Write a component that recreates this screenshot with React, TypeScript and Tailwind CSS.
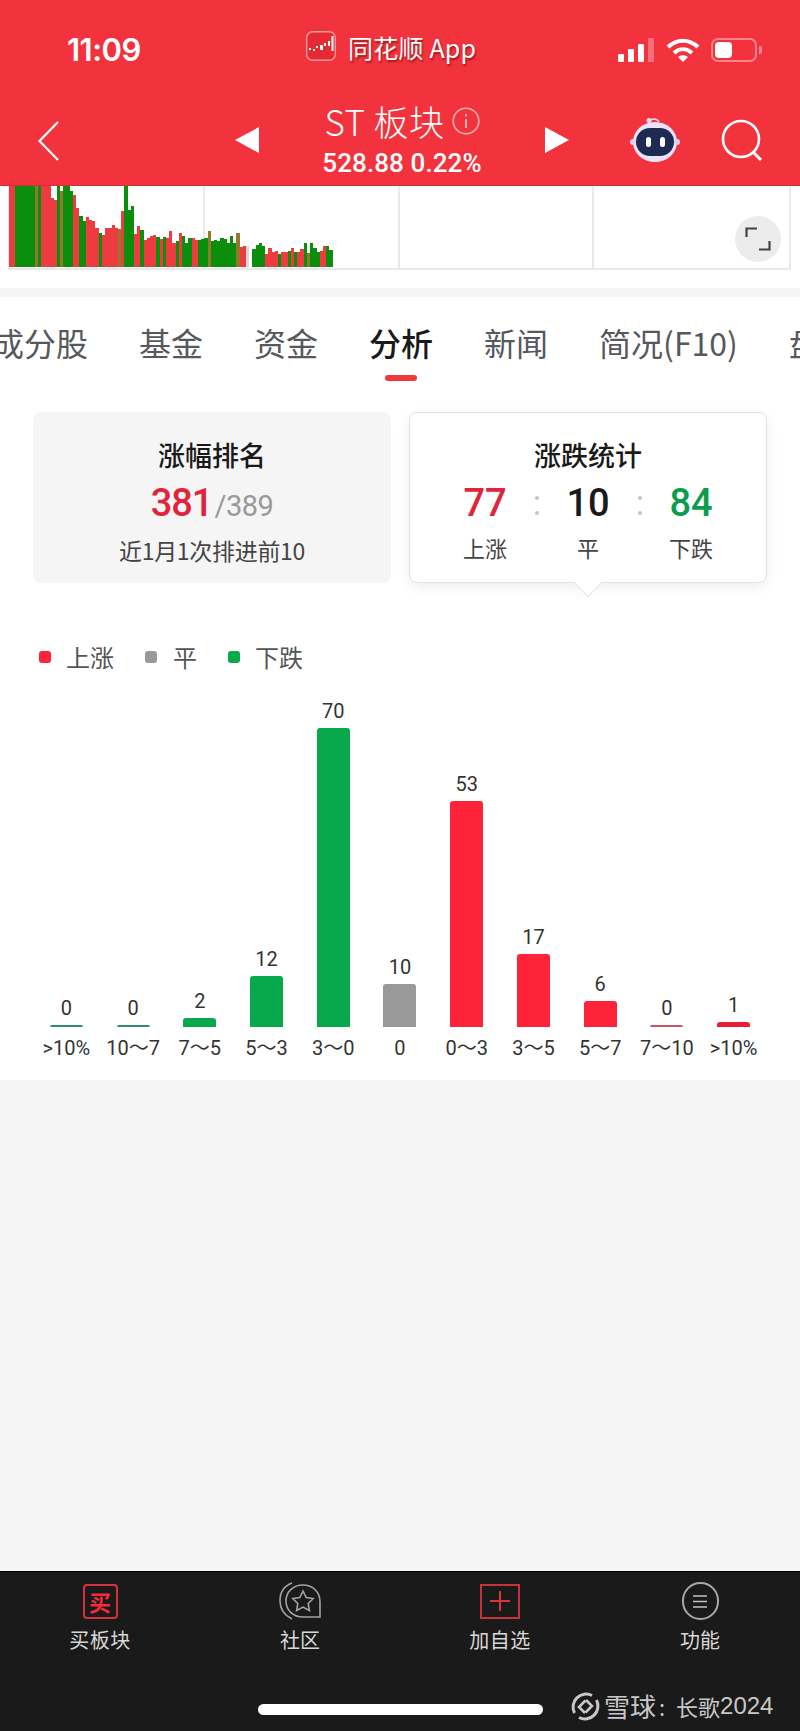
// App.tsx
const VOLUME: [string, number][] = [
  ['r', 20], ['r', 20], ['g', 20], ['g', 20], ['g', 20], ['g', 20], ['g', 20], ['g', 20], ['d', 20], ['g', 20],
  ['r', 20], ['r', 20], ['r', 20], ['r', 55], ['r', 60], ['g', 20], ['d', 35], ['g', 20], ['g', 20], ['g', 35],
  ['r', 47], ['r', 84], ['g', 110], ['g', 125], ['r', 113], ['r', 120], ['r', 125], ['r', 145], ['g', 160], ['r', 166],
  ['r', 145], ['r', 145], ['r', 135], ['r', 145], ['d', 148], ['r', 95], ['g', 20], ['g', 90], ['g', 80], ['r', 162],
  ['r', 140], ['g', 150], ['r', 180], ['r', 175], ['r', 170], ['r', 166], ['g', 172], ['r', 178], ['g', 172], ['r', 175],
  ['r', 154], ['r', 190], ['g', 185], ['r', 160], ['g', 168], ['g', 190], ['g', 175], ['r', 175], ['r', 180], ['g', 182],
  ['g', 178], ['g', 175], ['d', 155], ['g', 185], ['g', 182], ['g', 185], ['g', 176], ['g', 178], ['g', 190], ['g', 168],
  ['g', 190], ['d', 160], ['r', 203], ['r', 200], ['n', 200], ['x', 262], ['g', 207], ['g', 195], ['g', 190], ['g', 200],
  ['r', 222], ['r', 204], ['r', 218], ['r', 213], ['g', 222], ['r', 218], ['r', 218], ['g', 215], ['r', 206], ['g', 218],
  ['r', 218], ['r', 208], ['g', 190], ['d', 220], ['g', 190], ['g', 205], ['g', 218], ['r', 215], ['r', 198], ['g', 200],
  ['g', 212],
];

const BUCKETS = [
  { value: 0, label: '>10%', color: 'bg-[#2f8f6c]' },
  { value: 0, label: '10～7', color: 'bg-[#2f8f6c]' },
  { value: 2, label: '7～5', color: 'bg-[#08a84c]' },
  { value: 12, label: '5～3', color: 'bg-[#08a84c]' },
  { value: 70, label: '3～0', color: 'bg-[#08a84c]' },
  { value: 10, label: '0', color: 'bg-[#999999]' },
  { value: 53, label: '0～3', color: 'bg-[#ff233a]' },
  { value: 17, label: '3～5', color: 'bg-[#ff233a]' },
  { value: 6, label: '5～7', color: 'bg-[#ff233a]' },
  { value: 0, label: '7～10', color: 'bg-[#c4566a]' },
  { value: 1, label: '>10%', color: 'bg-[#e81f36]' },
];

const barColor = (c: string) => {
  if (c === 'r') return 'bg-[#ee3b3f]';
  if (c === 'g') return 'bg-[#0a8e0c]';
  if (c === 'd') return 'bg-[#8f7a2c]';
  if (c === 'n') return 'bg-[#d8d8d8]';
  return 'bg-transparent';
};

function VolumeChart() {
  return (
    <div className="relative h-[102px] bg-white">
      <div className="ml-[8px] grid h-[84px] w-[783px] grid-cols-4 border-x-2 border-b-2 border-[#e9e9e9]">
        <div className="border-r-2 border-[#e9e9e9]" />
        <div className="border-r-2 border-[#e9e9e9]" />
        <div className="border-r-2 border-[#e9e9e9]" />
        <div />
      </div>
      <div className="absolute left-[9px] top-0 flex h-[81px] w-[324px] items-end overflow-hidden">
        {VOLUME.map(([c, top], i) => (
          <div
            key={i}
            className={`flex-1 ${barColor(c)}`}
            style={{ height: `${(262 - top) / 3 + (top === 20 ? 3 : 0)}px` }}
          />
        ))}
      </div>
      <button className="absolute left-[735px] top-[30px] flex h-[46px] w-[46px] items-center justify-center rounded-full bg-[#ececec]">
        <svg width="26" height="24" viewBox="0 0 26 24" fill="none" stroke="#3f4348" strokeWidth="2.2">
          <path d="M1.5 10V1.5H12" />
          <path d="M14 22.5h10.5V14" />
        </svg>
      </button>
    </div>
  );
}

function Header() {
  return (
    <header className="h-[186px] shrink-0 border-b border-[#c9343a] bg-[#f2333d] text-white">
      <div className="flex h-[100px] items-start pl-[67px] pt-[31px]">
        <div className="w-[239px] pt-[1px] font-['Inter',sans-serif] text-[31px] font-semibold leading-[36px] tracking-[-0.5px]">11:09</div>
        <svg width="30" height="30" viewBox="0 0 30 30">
          <rect x="0.7" y="0.7" width="28.6" height="28.6" rx="6" fill="#e52a33" stroke="#f79a9d" strokeWidth="1.4" />
          <g fill="#fff">
            <rect x="3" y="17" width="2" height="2" />
            <rect x="7" y="18" width="2" height="2" />
            <rect x="10" y="15" width="2" height="2" />
            <rect x="14" y="14" width="3" height="5" />
            <rect x="18" y="12" width="2" height="3" />
            <rect x="22" y="10" width="2" height="5" />
            <rect x="25.5" y="5" width="2" height="15" />
          </g>
        </svg>
        <div className="ml-[12px] font-['Noto_Sans_CJK_SC',sans-serif] text-[25px] leading-[32px] tracking-[0.2px] [text-shadow:1px_2px_2px_rgba(90,0,0,0.55)]">同花顺 App</div>
        <div className="ml-auto flex items-center pr-[38px] pt-[7px]">
          <div className="flex h-[24px] items-end gap-[4px]">
            <div className="h-[8px] w-[6px] rounded-[1px] bg-white" />
            <div className="h-[13px] w-[6px] rounded-[1px] bg-white" />
            <div className="h-[18px] w-[6px] rounded-[1px] bg-white" />
            <div className="h-[24px] w-[6px] rounded-[1px] bg-white/30" />
          </div>
          <svg className="ml-[12px]" width="34" height="24" viewBox="0 0 34 24" fill="none" stroke="#fff" strokeWidth="4">
            <path d="M2 9C11 0.5 23 0.5 32 9" />
            <path d="M8 15c5.5-5 12.5-5 18 0" />
            <path d="M17 24l-5-5c3-2.500 7-2.500 10 0z" fill="#fff" stroke="none" />
          </svg>
          <div className="ml-[11px] flex h-[24px] w-[46px] items-center rounded-[7px] border-2 border-white/40 pl-[2px]">
            <div className="h-[16px] w-[17px] rounded-[4px] bg-white" />
          </div>
          <div className="ml-[2px] h-[8px] w-[3px] rounded-r-[2px] bg-white/40" />
        </div>
      </div>
      <div className="flex items-start pl-[38px]">
        <svg className="mt-[21px]" width="21" height="40" viewBox="0 0 21 40" fill="none" stroke="#fff" strokeWidth="2.2">
          <path d="M20 1L1.500 20 20 39" />
        </svg>
        <svg className="ml-[176px] mt-[27px]" width="24" height="26" viewBox="0 0 24 26" fill="#fff">
          <path d="M24 0V26L0 13z" />
        </svg>
        <div className="flex w-[286px] flex-col items-center font-['Noto_Sans_CJK_SC',sans-serif]">
          <div className="flex h-[42px] items-center">
            <span className="text-[35px] font-light leading-[42px] tracking-[0.5px]">ST 板块</span>
            <svg className="ml-[7px]" width="28" height="28" viewBox="0 0 28 28" fill="none" stroke="#ffb3b5" strokeWidth="1.600">
              <circle cx="14" cy="14" r="12.800" />
              <path d="M14 12v9" strokeWidth="2" />
              <path d="M14 7v2.500" strokeWidth="2" />
            </svg>
          </div>
          <div className="mt-[1px] font-['Roboto',sans-serif] text-[26px] font-medium leading-[40px] tracking-[0.1px]">528.88 0.22%</div>
        </div>
        <svg className="mt-[27px]" width="24" height="26" viewBox="0 0 24 26" fill="#fff">
          <path d="M0 0V26L24 13z" />
        </svg>
        <svg className="ml-[61px] mt-[17px]" width="50" height="46" viewBox="0 0 50 46">
          <path d="M20 6c0-3 2-4 4-4s4 1 5 3" fill="none" stroke="#e6dcf7" strokeWidth="1.500" />
          <circle cx="19" cy="3.500" r="2.500" fill="#e6dcf7" />
          <ellipse cx="25" cy="25" rx="22" ry="20" fill="#eae4fb" />
          <circle cx="3" cy="25" r="3" fill="#dcd3f2" />
          <circle cx="47" cy="25" r="3" fill="#dcd3f2" />
          <rect x="6" y="11" width="38" height="28" rx="14" fill="#1e2a4f" />
          <rect x="16" y="20" width="5" height="10" rx="2.500" fill="#fff" />
          <rect x="30" y="20" width="5" height="10" rx="2.500" fill="#fff" />
        </svg>
        <svg className="ml-[41px] mt-[19px]" width="42" height="42" viewBox="0 0 42 42" fill="none" stroke="#fff" strokeWidth="2.600">
          <circle cx="20" cy="20" r="18" />
          <path d="M32 33l8 8" strokeWidth="3" />
        </svg>
      </div>
    </header>
  );
}

function RankCard() {
  return (
    <div className="flex h-[171px] w-[358px] flex-col items-center rounded-lg bg-[#f5f5f5] pt-[25px]">
      <div className="text-[27px] font-medium leading-[36px] text-[#1a1a1a]">涨幅排名</div>
      <div className="mt-[8px] flex items-baseline font-['Roboto',sans-serif] leading-[44px]">
        <span className="text-[38px] font-medium tracking-[-1px] text-[#e0243c]">381</span>
        <span className="ml-[2px] text-[29px] tracking-[-0.5px] text-[#999999]">/389</span>
      </div>
      <div className="mt-[6px] text-[23px] leading-[32px] tracking-[-0.3px] text-[#444444]">近1月1次排进前10</div>
    </div>
  );
}

function StatCol({ value, label, color }: { value: number; label: string; color: string }) {
  return (
    <div className="flex w-[72px] flex-col items-center">
      <div className={`font-['Roboto',sans-serif] text-[38px] font-medium leading-[44px] ${color}`}>{value}</div>
      <div className="mt-[6px] text-[22px] leading-[32px] text-[#444444]">{label}</div>
    </div>
  );
}

function Colon() {
  return (
    <div className="flex h-[44px] w-[31px] flex-col items-center justify-center gap-[11px] pt-[5px]">
      <div className="h-[4px] w-[4px] rounded-full bg-[#c4c4c4]" />
      <div className="h-[4px] w-[4px] rounded-full bg-[#c4c4c4]" />
    </div>
  );
}

function StatCard() {
  return (
    <div className="relative flex h-[171px] w-[358px] flex-col items-center rounded-lg border border-[#e2e2e2] bg-white pt-[24px] shadow-[0_4px_14px_rgba(0,0,0,0.07)]">
      <div className="text-[27px] font-medium leading-[36px] text-[#1a1a1a]">涨跌统计</div>
      <div className="mt-[8px] flex">
        <StatCol value={77} label="上涨" color="text-[#e0243c]" />
        <Colon />
        <StatCol value={10} label="平" color="text-[#1a1a1a]" />
        <Colon />
        <StatCol value={84} label="下跌" color="text-[#0a9e4c]" />
      </div>
      <div className="absolute -bottom-[11px] left-[168px] h-[20px] w-[20px] rotate-45 border-b border-r border-[#e2e2e2] bg-white" />
    </div>
  );
}

function Distribution() {
  return (
    <div className="grid grid-cols-11 px-[33px]">
      {BUCKETS.map((b, i) => (
        <div key={i} className="flex flex-col items-center">
          <div className="flex h-[354px] flex-col items-center justify-end">
            <div className="mb-[5px] font-['Roboto',sans-serif] text-[20px] leading-[24px] text-[#333333]">{b.value}</div>
            <div
              className={`w-[33px] rounded-t-[3px] ${b.color}`}
              style={{ height: `${b.value === 0 ? 2 : b.value === 1 ? 5 : Math.round(b.value * 4.27)}px` }}
            />
          </div>
          <div className="mt-[7px] whitespace-nowrap font-['Roboto','Noto_Sans_CJK_SC',sans-serif] text-[20px] leading-[28px] text-[#333333]">{b.label}</div>
        </div>
      ))}
    </div>
  );
}

function BottomBar() {
  return (
    <footer className="relative h-[160px] shrink-0 border-t border-black bg-[#1a1a1a] font-['Noto_Sans_CJK_SC',sans-serif]">
      <div className="grid grid-cols-4 pt-[10px] text-[20px] leading-[28px] text-[#d8d8d8]">
        <div className="flex flex-col items-center">
          <div className="flex h-[38px] items-center">
            <div className="flex h-[35px] w-[35px] items-center justify-center rounded-[4px] border-2 border-[#d2323f] text-[22px] font-bold leading-none text-[#f02b3c]">买</div>
          </div>
          <div className="mt-[6px] tracking-[0.5px]">买板块</div>
        </div>
        <div className="flex flex-col items-center">
          <svg width="42" height="38" viewBox="0 0 42 38" fill="none" stroke="#a3a3a3" strokeWidth="1.600">
            <path d="M13 1C5 4 1 11 1 19s4 14 12 18" />
            <path d="M41 35H24C14 35 7 28 7 19S14 3 24 3s17 7 17 17z" />
            <path d="M24 9l3.200 6.500 7 1-5 5 1.200 7-6.400-3.400-6.400 3.400 1.200-7-5-5 7-1z" />
          </svg>
          <div className="mt-[6px]">社区</div>
        </div>
        <div className="flex flex-col items-center">
          <div className="flex h-[38px] items-center">
            <div className="flex h-[35px] w-[40px] items-center justify-center border-2 border-[#c4343c]">
              <svg width="20" height="20" viewBox="0 0 20 20" stroke="#d8353e" strokeWidth="2">
                <path d="M0 10h20M10 0v20" />
              </svg>
            </div>
          </div>
          <div className="mt-[6px] tracking-[0.5px]">加自选</div>
        </div>
        <div className="flex flex-col items-center">
          <div className="flex h-[38px] w-[37px] items-center justify-center rounded-full border-2 border-[#a8a8a8]">
            <svg width="14" height="13" viewBox="0 0 14 13" stroke="#c4c4c4" strokeWidth="1.600">
              <path d="M0 1h14M0 6.500h14M0 12h14" />
            </svg>
          </div>
          <div className="mt-[6px]">功能</div>
        </div>
      </div>
      <div className="ml-[258px] mt-[50px] h-[11px] w-[285px] rounded-full bg-white" />
      <div className="absolute left-[571px] top-[118px] flex items-center text-[#c8c8c8]">
        <svg width="29" height="29" viewBox="0 0 29 29" fill="none" stroke="#c8c8c8" strokeWidth="3">
          <path d="M21 3.500A13 13 0 0 0 3.500 21" />
          <path d="M8 25.500A13 13 0 0 0 25.500 8" />
          <path d="M14.500 8.500L8 15l6 6M14.500 20.500L21 14l-6-6" strokeWidth="2.600" />
        </svg>
        <span className="ml-[4px] text-[26px] leading-[32px]">雪球</span>
        <span className="ml-[3px] w-[17px] text-[22px] leading-[32px]">:</span>
        <span className="text-[22px] leading-[32px]">长歌</span>
        <span className="font-['Liberation_Sans',sans-serif] text-[24px] leading-[32px]">2024</span>
      </div>
    </footer>
  );
}

export default function App() {
  const tabs = ['成分股', '基金', '资金', '分析', '新闻', '简况(F10)', '盘口'];

  return (
    <div className="flex h-screen w-[800px] flex-col overflow-hidden bg-[#f5f5f5] font-['Noto_Sans_CJK_SC',sans-serif]">
      <Header />
      <VolumeChart />
      <div className="h-[9px] shrink-0 bg-[#f5f5f5]" />

      <section className="shrink-0 bg-white">
        {/* вкладки */}
        <div className="flex gap-[51px] overflow-hidden pt-[23px] pl-0 text-[32px] leading-[44px]">
          {tabs.map((t, i) => (
            <div key={t} className={`flex shrink-0 flex-col items-center ${i === 0 ? '-ml-[8px]' : ''}`}>
              <span className={t === '分析' ? 'font-medium text-[#1a1a1a]' : 'text-[#55585c]'}>{t}</span>
              {t === '分析' && <div className="mt-[11px] h-[6px] w-[32px] rounded-full bg-[#f0393b]" />}
            </div>
          ))}
        </div>

        <div className="mt-[31px] flex gap-[18px] px-[33px]">
          <RankCard />
          <StatCard />
        </div>

        <div className="mt-[58px] flex items-center pl-[39px] text-[24px] leading-[32px] text-[#555555]">
          <div className="h-[12px] w-[12px] rounded-[3px] bg-[#ff233a]" />
          <span className="ml-[15px]">上涨</span>
          <div className="ml-[31px] h-[12px] w-[12px] rounded-[3px] bg-[#999999]" />
          <span className="ml-[16px]">平</span>
          <div className="ml-[31px] h-[12px] w-[12px] rounded-[3px] bg-[#08a84c]" />
          <span className="ml-[15px]">下跌</span>
        </div>

        <Distribution />
        <div className="h-[18px]" />
      </section>

      <div className="flex-1" />
      <BottomBar />
    </div>
  );
}
